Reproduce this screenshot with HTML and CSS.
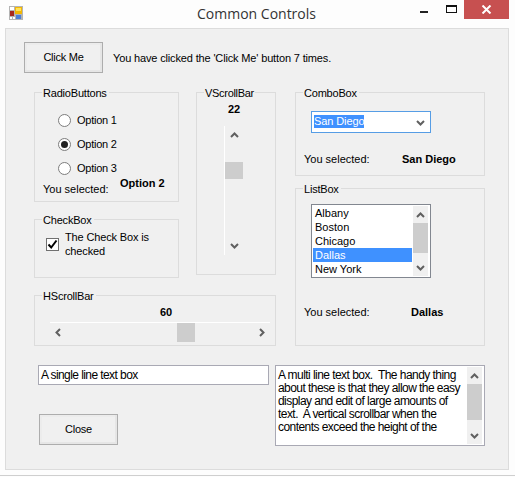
FILE: index.html
```html
<!DOCTYPE html>
<html lang="en">
<head>
<meta charset="utf-8">
<title>Common Controls</title>
<link rel="stylesheet" href="styles.css">
</head>
<body>
<div class="window">
  <header class="titlebar">
    <svg class="app-icon" width="14" height="14" viewBox="0 0 14 14">
      <rect width="14" height="14" fill="#b4b4b4"/>
      <rect x="1" y="1" width="4" height="3" fill="#fff"/>
      <rect x="1" y="11" width="2" height="2" fill="#fff"/>
      <rect x="4" y="11" width="2" height="2" fill="#fff"/>
      <rect x="1" y="5" width="4" height="5" fill="#a8281c"/>
      <rect x="6" y="1" width="7" height="7" fill="#f2b705"/>
      <rect x="7" y="2" width="5" height="3" fill="#ffe25a"/>
      <rect x="7" y="9" width="5" height="4" fill="#4c7fd6"/>
    </svg>
    <span class="title">Common Controls</span>
    <div class="win-controls">
      <span class="win-min"></span>
      <span class="win-max"></span>
      <span class="win-close">
        <svg width="11" height="9" viewBox="0 0 11 9"><path d="M1.5 .5 L9.5 8.5 M9.5 .5 L1.5 8.5" stroke="#fff" stroke-width="2" fill="none"/></svg>
      </span>
    </div>
  </header>

  <main class="client">
    <div class="click-row">
      <button class="btn" type="button">Click Me</button>
      <span class="click-msg">You have clicked the 'Click Me' button 7 times.</span>
    </div>

    <div class="main-grid">
      <div class="left-col">
        <div class="left-top">
          <section class="group group-radio">
            <div class="legend">RadioButtons</div>
            <div class="radio-list">
              <div class="radio-row"><span class="radio"></span>Option 1</div>
              <div class="radio-row"><span class="radio radio-on"></span>Option 2</div>
              <div class="radio-row"><span class="radio"></span>Option 3</div>
            </div>
            <div class="summary summary-radio">
              <span class="sel-label sel-radio">You selected:</span>
              <b class="sel-value">Option 2</b>
            </div>
          </section>

          <section class="group group-check">
            <div class="legend">CheckBox</div>
            <div class="check-row">
              <span class="checkbox">
                <svg width="11" height="11" viewBox="0 0 11 11"><path d="M1.5 5.5 L4.2 8.5 L9.5 1.5" stroke="#000" stroke-width="2" fill="none"/></svg>
              </span>
              <span class="check-text">The Check Box is checked</span>
            </div>
          </section>

          <section class="group group-vscroll">
            <div class="legend legend-tight">VScrollBar</div>
            <b class="vs-value">22</b>
            <div class="vs-track">
              <span class="vs-btn"><svg class="chev" width="9" height="6" viewBox="0 0 9 6"><path d="M1 5 L4.5 1.5 L8 5"/></svg></span>
              <span class="vs-gap"></span>
              <span class="vs-thumb"></span>
              <span class="vs-fill"></span>
              <span class="vs-btn"><svg class="chev" width="9" height="6" viewBox="0 0 9 6"><path d="M1 1 L4.5 4.5 L8 1"/></svg></span>
            </div>
          </section>
        </div>

        <section class="group group-hscroll">
          <div class="legend">HScrollBar</div>
          <b class="hs-value">60</b>
          <div class="hs-track">
            <span class="hs-btn"><svg class="chev" width="6" height="9" viewBox="0 0 6 9"><path d="M5 1 L1.5 4.5 L5 8"/></svg></span>
            <span class="hs-gap"></span>
            <span class="hs-thumb"></span>
            <span class="hs-fill"></span>
            <span class="hs-btn"><svg class="chev" width="6" height="9" viewBox="0 0 6 9"><path d="M1 1 L4.5 4.5 L1 8"/></svg></span>
          </div>
        </section>
      </div>

      <div class="right-col">
        <section class="group group-combo">
          <div class="legend">ComboBox</div>
          <div class="combo">
            <span class="combo-sel">San Diego</span>
            <svg class="chev combo-chev" width="9" height="6" viewBox="0 0 9 6"><path d="M1 1 L4.5 4.5 L8 1"/></svg>
          </div>
          <div class="summary summary-combo">
            <span class="sel-label sel-combo">You selected:</span>
            <b class="sel-value">San Diego</b>
          </div>
        </section>

        <section class="group group-list">
          <div class="legend">ListBox</div>
          <div class="listbox">
            <ul class="list-items">
              <li>Albany</li>
              <li>Boston</li>
              <li>Chicago</li>
              <li class="list-active">Dallas</li>
              <li>New York</li>
            </ul>
            <div class="sb">
              <span class="sb-btn"><svg class="chev" width="9" height="6" viewBox="0 0 9 6"><path d="M1 5 L4.5 1.5 L8 5"/></svg></span>
              <span class="sb-thumb sb-thumb-list"></span>
              <span class="sb-fill"></span>
              <span class="sb-btn"><svg class="chev" width="9" height="6" viewBox="0 0 9 6"><path d="M1 1 L4.5 4.5 L8 1"/></svg></span>
            </div>
          </div>
          <div class="summary summary-list">
            <span class="sel-label sel-list">You selected:</span>
            <b class="sel-value">Dallas</b>
          </div>
        </section>
      </div>
    </div>

    <div class="bottom-row">
      <div class="bottom-left">
        <div class="textbox">A single line text box</div>
        <button class="btn btn-close" type="button">Close</button>
      </div>
      <div class="multiline">
        <div class="multi-text">A multi line text box.&nbsp; The handy thing about these is that they allow the easy display and edit of large amounts of text.&nbsp; A vertical scrollbar when the contents exceed the height of the</div>
        <div class="sb">
          <span class="sb-btn"><svg class="chev" width="9" height="6" viewBox="0 0 9 6"><path d="M1 5 L4.5 1.5 L8 5"/></svg></span>
          <span class="sb-thumb sb-thumb-multi"></span>
          <span class="sb-fill"></span>
          <span class="sb-btn"><svg class="chev" width="9" height="6" viewBox="0 0 9 6"><path d="M1 1 L4.5 4.5 L8 1"/></svg></span>
        </div>
      </div>
    </div>
  </main>
</div>
</body>
</html>
```
FILE: styles.css
```css
* { box-sizing: border-box; }
html, body { margin: 0; padding: 0; }
body {
  background: #fdfdfd;
  font-family: "Liberation Sans", Arial, sans-serif;
  font-size: 11px;
  line-height: 14px;
  color: #000;
  height: 477px;
  overflow: hidden;
}
.window { height: 476px; border-bottom: 1px solid #cfcfcf; }

.titlebar { height: 28px; display: flex; align-items: flex-start; }
.app-icon { margin: 6px 0 0 9px; flex: none; }
.title {
  margin: 4px 0 0 174px;
  font-family: "Open Sans", sans-serif;
  font-size: 14px;
  line-height: 20px;
  color: #333;
}
.win-controls { margin-left: auto; margin-right: 6px; display: flex; }
.win-min { width: 8px; height: 2px; background: #222; margin: 11px 18px 0 0; }
.win-max { width: 11px; height: 8px; border: 1px solid #111; border-top-width: 2px; margin: 5px 7px 0 0; }
.win-close { width: 45px; height: 19px; background: #c75050; display: flex; align-items: center; justify-content: center; }

.client {
  width: 504px;
  height: 442px;
  margin-left: 5px;
  background: #f0f0f0;
  border: 1px solid #dcdcdc;
  padding: 13px 0 0 18px;
}

.btn {
  width: 79px;
  height: 31px;
  padding: 0 0 2px;
  font: inherit;
  letter-spacing: -0.25px;
  color: #000;
  background: #f0f0f0;
  border: 1px solid #adadad;
  box-shadow: inset -2px -2px 0 #e6e6e6, inset 2px 2px 0 #ececec;
}
.click-row { display: flex; align-items: center; }
.click-msg { margin-left: 10px; letter-spacing: -0.15px; }

.main-grid { display: flex; gap: 19px; margin: 19px 0 0 10px; }
.left-col { width: 242px; display: flex; flex-direction: column; gap: 17px; }
.right-col { width: 190px; display: flex; flex-direction: column; gap: 12px; }
.left-top {
  display: grid;
  grid-template-columns: 145px 80px;
  grid-template-rows: 110px 59px;
  column-gap: 17px;
  row-gap: 17px;
}

.group { border: 1px solid #dcdcdc; }
.legend {
  display: table;
  margin: -7px 0 0 7px;
  padding: 0 2px 0 1px;
  background: #f0f0f0;
  letter-spacing: -0.2px;
}
.legend-tight { margin-left: 7px; padding: 0 1px; letter-spacing: -0.3px; }

.group-radio { grid-column: 1; grid-row: 1; }
.group-check { grid-column: 1; grid-row: 2; }
.group-vscroll { grid-column: 2; grid-row: 1 / 3; height: 183px; }
.group-hscroll { height: 51px; }
.group-combo { height: 84px; }
.group-list { height: 158px; }

.radio-list { display: flex; flex-direction: column; gap: 10px; margin: 13px 0 0 23px; letter-spacing: -0.25px; }
.radio-row { display: flex; align-items: center; gap: 6px; }
.radio {
  width: 13px; height: 13px;
  border: 1px solid #7d7d7d;
  border-radius: 50%;
  background: #fff;
  display: flex; align-items: center; justify-content: center;
}
.radio-on::after { content: ""; width: 7px; height: 7px; border-radius: 50%; background: #222; }

.summary { display: flex; margin-left: 8px; }
.summary-radio { margin-top: 1px; align-items: flex-start; }
.summary-radio .sel-label { margin-top: 6px; }
.summary-combo { margin-top: 19px; }
.summary-list { margin-top: 27px; }
.sel-radio { width: 77px; }
.sel-combo { width: 98px; }
.sel-list { width: 107px; }
.sel-value { font-weight: 700; }

.check-row { display: flex; gap: 6px; margin: 3px 0 0 11px; }
.checkbox {
  width: 13px; height: 13px; flex: none;
  margin-top: 8px;
  border: 1px solid #707070;
  background: #fff;
  display: flex;
}
.check-text { width: 100px; letter-spacing: -0.15px; }

.vs-value { display: block; margin: 2px 0 0 31px; }
.vs-track {
  width: 19px; height: 129px;
  margin: 10px 0 0 27px;
  border-left: 1px solid #fff;
  display: flex; flex-direction: column;
}
.vs-btn { height: 18px; flex: none; display: flex; align-items: center; justify-content: center; }
.vs-gap { height: 18px; flex: none; }
.vs-thumb { height: 17px; flex: none; background: #cdcdcd; }
.vs-fill { flex: 1; }

.chev { fill: none; stroke: #606060; stroke-width: 2; display: block; flex: none; }

.hs-value { display: block; margin: 2px 0 0 125px; }
.hs-track {
  width: 220px; height: 20px;
  margin: 3px 0 0 15px;
  border-top: 1px solid #fff;
  display: flex;
}
.hs-btn { width: 16px; flex: none; display: flex; align-items: center; justify-content: center; }
.hs-gap { width: 111px; flex: none; }
.hs-thumb { width: 18px; flex: none; background: #cdcdcd; }
.hs-fill { flex: 1; }

.combo {
  width: 120px; height: 22px;
  margin: 11px 0 0 15px;
  padding: 3px 5px 0 2px;
  border: 1px solid #569de5;
  background: #fff;
  display: flex;
  justify-content: space-between;
  align-items: flex-start;
}
.combo-sel { background: #3f91ff; color: #fff; height: 13px; line-height: 13px; letter-spacing: -0.1px; }
.combo-chev { margin-top: 5px; }

.listbox {
  width: 120px; height: 74px;
  margin: 8px 0 0 15px;
  padding: 1px 2px 1px 1px;
  border: 1px solid #828790;
  background: #fff;
  display: flex;
}
.list-items { list-style: none; margin: 0; padding: 0; flex: 1; }
.list-items li { height: 14px; padding-left: 2px; }
.list-active { background: #3f91ff; color: #fff; }
.listbox .sb { margin-left: 1px; }

.sb { width: 15px; flex: none; background: #f0f0f0; display: flex; flex-direction: column; }
.sb-btn { height: 17px; flex: none; display: flex; align-items: center; justify-content: center; }
.sb-thumb { flex: none; background: #cdcdcd; }
.sb-thumb-list { height: 30px; }
.sb-thumb-multi { height: 36px; }
.sb-fill { flex: 1; }

.bottom-row { display: flex; margin: 19px 0 0 14px; }
.bottom-left { width: 237px; }
.textbox {
  width: 231px; height: 20px;
  padding: 2px 0 0 2px;
  border: 1px solid #a9a9b4;
  background: #fff;
  font-size: 12px;
  letter-spacing: -0.58px;
}
.btn-close { display: block; margin: 29px 0 0 1px; }
.multiline {
  width: 210px; height: 81px;
  padding: 1px 2px 1px 0;
  border: 1px solid #a9a9b4;
  background: #fff;
  display: flex;
}
.multi-text {
  flex: 1;
  padding: 2px 0 0 2px;
  font-size: 12px;
  line-height: 13px;
  letter-spacing: -0.55px;
}
```
